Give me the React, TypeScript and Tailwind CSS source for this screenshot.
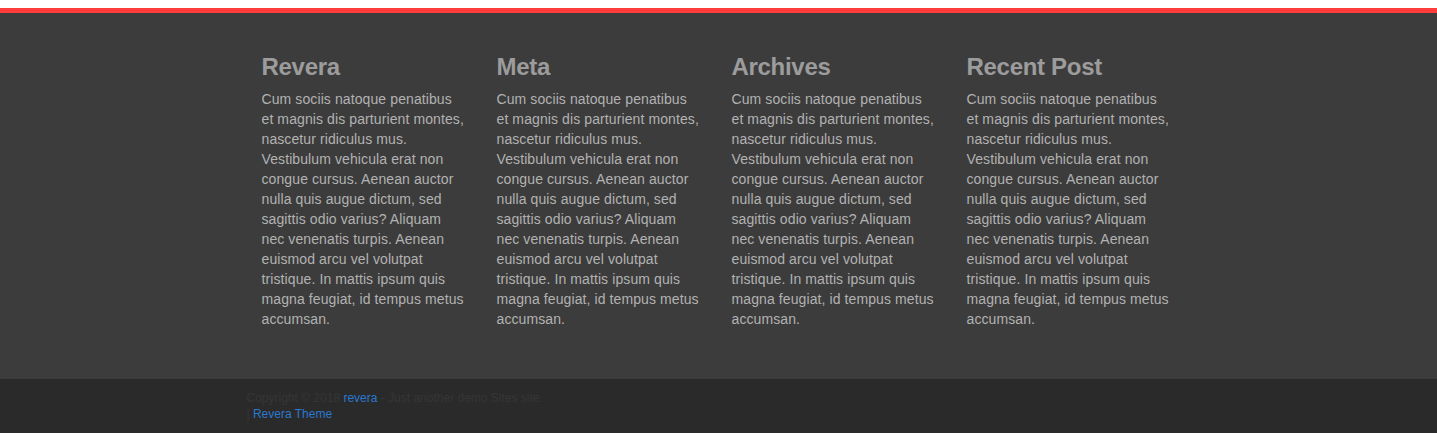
import React from "react";

interface WidgetProps {
	title: string;
}

// lines are broken as in the theme's rendering
const LOREM_LINES = [
	"Cum sociis natoque penatibus",
	"et magnis dis parturient montes,",
	"nascetur ridiculus mus.",
	"Vestibulum vehicula erat non",
	"congue cursus. Aenean auctor",
	"nulla quis augue dictum, sed",
	"sagittis odio varius? Aliquam",
	"nec venenatis turpis. Aenean",
	"euismod arcu vel volutpat",
	"tristique. In mattis ipsum quis",
	"magna feugiat, id tempus metus",
	"accumsan.",
];

const Widget: React.FC<WidgetProps> = ({ title }) => {
	return (
		<div className="w-[235px] px-[15px]">
			<h3 className="text-[24px] leading-[30px] font-bold text-[#9c9c9c] tracking-[-0.3px]">
				{title}
			</h3>
			<p className="mt-[7px] text-[14px] leading-[20px] text-[#b2b2b2] tracking-[0.1px] whitespace-nowrap">
				{LOREM_LINES.map((line, i) => (
					<React.Fragment key={i}>
						{line}
						{i < LOREM_LINES.length - 1 && <br />}
					</React.Fragment>
				))}
			</p>
		</div>
	);
};

export default function App() {
	return (
		<div
			className="w-full min-h-[433px] bg-white pt-[8px]"
			style={{ fontFamily: '"Liberation Sans", Arial, sans-serif' }}
		>
			{/* TOP RED BAR */}
			<div className="h-[5px] bg-[#ff3b3b]" />

			{/* WIDGETS AREA */}
			<div className="bg-[#3c3c3c] pt-[39px] pb-[50px]">
				<div className="w-[944px] mx-auto flex">
					<Widget title="Revera" />
					<Widget title="Meta" />
					<Widget title="Archives" />
					<Widget title="Recent Post" />
				</div>
			</div>

			{/* COPYRIGHT */}
			<div className="bg-[#2a2a2a] h-[54px] pt-[11px]">
				<div className="w-[944px] mx-auto text-[12px] leading-[16px] text-[#363636]">
					<p>
						Copyright © 2018 <a className="text-[#2a78d0]">revera</a> - Just another demo Sites site.
					</p>
					<p>
						| <a className="text-[#2a78d0]">Revera Theme</a>
					</p>
				</div>
			</div>
		</div>
	);
}
